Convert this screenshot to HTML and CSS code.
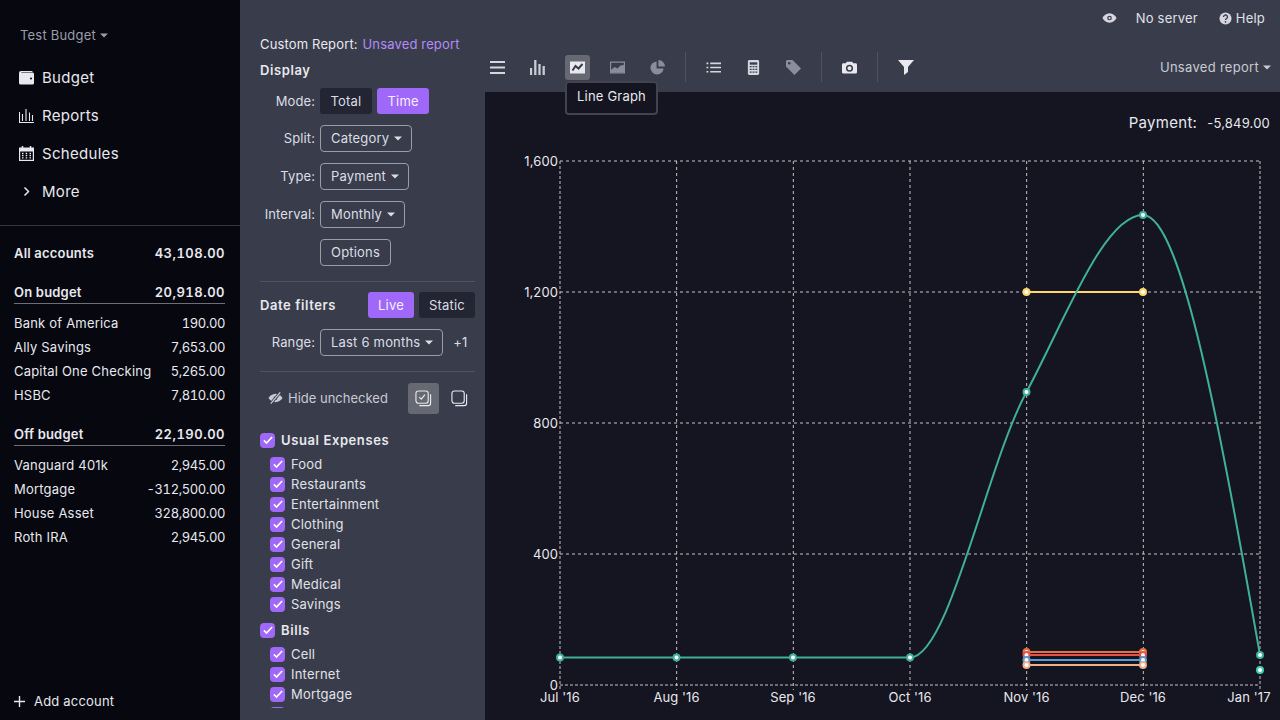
FILE: index.html
```html
<!DOCTYPE html>
<html lang="en">
<head>
    <meta charset="UTF-8">
    <title>Custom Report</title>
    <link rel="stylesheet" href="styles.css">
</head>
<body>
    <svg class="defs" width="0" height="0">
        <symbol id="check" viewBox="0 0 16 16">
            <path d="M2.500 8.500l3.500 3.500 7.500-8" fill="none" stroke="#fff" stroke-width="2.200"/>
        </symbol>
        <symbol id="caret" viewBox="0 0 8 5">
            <path d="M0 .5h8L4 4.500z" fill="currentColor"/>
        </symbol>
    </svg>

    <!-- Sidebar -->
    <div class="sidebar">
        <div class="budget-name">Test Budget <svg class="caret"><use href="#caret"/></svg></div>
        <div class="nav">
            <div class="nav-item">
                <svg viewBox="0 0 15 15"><path d="M2 1h10.500a1.500 1.500 0 0 1 1.300 1H2.300v.6H13.500A1.500 1.500 0 0 1 15 4v9a1.500 1.500 0 0 1-1.500 1.500H1.500A1.500 1.500 0 0 1 0 13V3a2 2 0 0 1 2-2z" fill="#e8e8ee"/><circle cx="12" cy="8.500" r="1" fill="#06070f"/></svg>
                Budget
            </div>
            <div class="nav-item">
                <svg viewBox="0 0 15 15"><path d="M.5 4v10.500H15M3.500 13V6M7 13V1M10.500 13V4.500M13.500 13V7" fill="none" stroke="#e8e8ee" stroke-width="1.100"/></svg>
                Reports
            </div>
            <div class="nav-item">
                <svg viewBox="0 0 15 15"><path d="M0 1.500h15V15H0z" fill="#e8e8ee"/><path d="M3.500 0v3M11.500 0v3" stroke="#e8e8ee" stroke-width="1.500"/><path d="M1.200 5.500h12.600v8.300H1.200z" fill="#06070f"/><path d="M3 7.500h1.500M6.700 7.500h1.500M10.500 7.500H12M3 9.700h1.500M6.700 9.700h1.500M10.500 9.700H12M3 11.900h1.500M6.700 11.900h1.500M10.500 11.900H12" stroke="#e8e8ee" stroke-width="1.300"/></svg>
                Schedules
            </div>
            <div class="nav-item">
                <svg viewBox="0 0 15 15"><path d="M5.500 3.500L9.500 7.500 5.500 11.500" fill="none" stroke="#e8e8ee" stroke-width="1.500"/></svg>
                More
            </div>
        </div>
        <div class="accounts">
            <div class="account-row total"><span>All accounts</span><span class="amount">43,108.00</span></div>
            <div class="account-row heading"><span>On budget</span><span class="amount">20,918.00</span></div>
            <div class="account-row"><span>Bank of America</span><span class="amount">190.00</span></div>
            <div class="account-row"><span>Ally Savings</span><span class="amount">7,653.00</span></div>
            <div class="account-row"><span>Capital One Checking</span><span class="amount">5,265.00</span></div>
            <div class="account-row"><span>HSBC</span><span class="amount">7,810.00</span></div>
            <div class="account-row heading"><span>Off budget</span><span class="amount">22,190.00</span></div>
            <div class="account-row"><span>Vanguard 401k</span><span class="amount">2,945.00</span></div>
            <div class="account-row"><span>Mortgage</span><span class="amount">-312,500.00</span></div>
            <div class="account-row"><span>House Asset</span><span class="amount">328,800.00</span></div>
            <div class="account-row"><span>Roth IRA</span><span class="amount">2,945.00</span></div>
        </div>
        <div class="add-account">
            <svg viewBox="0 0 12 12"><path d="M6 0v12M0 6h12" stroke="#e8e8ee" stroke-width="1.500"/></svg>
            Add account
        </div>
    </div>

    <div class="main">
        <!-- Top bar -->
        <div class="topbar">
            <svg class="top-eye" viewBox="0 0 16 12"><path d="M8 1C4.500 1 1.800 3.500.5 6c1.300 2.500 4 5 7.500 5s6.200-2.500 7.500-5C14.200 3.500 11.500 1 8 1z" fill="#d5d6de"/><circle cx="8" cy="6" r="2.500" fill="#393d4b"/><circle cx="8" cy="6" r="1.200" fill="#d5d6de"/></svg>
            <span class="top-server">No server</span>
            <svg class="top-help" viewBox="0 0 14 14"><circle cx="7" cy="7" r="6.500" fill="#d5d6de"/><path d="M4.900 5.300a2.100 2.100 0 1 1 3.300 1.700c-.8.500-1.200.9-1.200 1.600" fill="none" stroke="#393d4b" stroke-width="1.500"/><circle cx="7" cy="10.600" r=".9" fill="#393d4b"/></svg>
            <span>Help</span>
        </div>

        <div class="report">
            <!-- Left panel -->
            <div class="panel">
                <div class="report-title">Custom Report: <span class="report-name">Unsaved report</span></div>
                <div class="section-title">Display</div>
                <div class="field mode"><label>Mode:</label><button class="toggle">Total</button><button class="toggle active">Time</button></div>
                <div class="field"><label>Split:</label><button class="select">Category <svg class="caret"><use href="#caret"/></svg></button></div>
                <div class="field"><label>Type:</label><button class="select">Payment <svg class="caret"><use href="#caret"/></svg></button></div>
                <div class="field"><label>Interval:</label><button class="select">Monthly <svg class="caret"><use href="#caret"/></svg></button></div>
                <div class="field"><label></label><button class="select">Options</button></div>
                <hr class="divider first">
                <div class="date-head">
                    <div class="section-title">Date filters</div>
                    <button class="toggle active">Live</button><button class="toggle">Static</button>
                </div>
                <div class="field range"><label>Range:</label><button class="select">Last 6 months <svg class="caret"><use href="#caret"/></svg></button><span class="offset">+1</span></div>
                <hr class="divider">
                <div class="hide-row">
                    <svg class="hide-icon" viewBox="0 0 16 14"><path d="M8 2.500C4.500 2.500 1.800 5 .5 7c1.300 2 4 4.500 7.500 4.500S14.200 9 15.500 7C14.200 5 11.500 2.500 8 2.500z" fill="#c9cad3"/><circle cx="8" cy="7" r="2" fill="#393d4b"/><path d="M3 13L13 1" stroke="#393d4b" stroke-width="3.200"/><path d="M3 13L13 1" stroke="#c9cad3" stroke-width="1.400"/></svg>
                    <span class="hide-label">Hide unchecked</span>
                    <span class="square-btn on">
                        <svg viewBox="0 0 18 18"><rect x="1" y="1" width="13" height="13" rx="2.500" fill="none" stroke="#e8e8ee" stroke-width="1.200"/><path d="M16.500 4.500v9.500a2.500 2.500 0 0 1-2.500 2.500H4.500" fill="none" stroke="#e8e8ee" stroke-width="1.200"/><path d="M4.500 7.500l2.200 2.200 3.800-4.700" fill="none" stroke="#e8e8ee" stroke-width="1.300"/></svg>
                    </span>
                    <span class="square-btn">
                        <svg viewBox="0 0 18 18"><rect x="1" y="1" width="13" height="13" rx="2.500" fill="none" stroke="#e8e8ee" stroke-width="1.200"/><path d="M16.500 4.500v9.500a2.500 2.500 0 0 1-2.500 2.500H4.500" fill="none" stroke="#e8e8ee" stroke-width="1.200"/></svg>
                    </span>
                </div>
                <div class="categories">
                    <div class="group"><span class="box"><svg><use href="#check"/></svg></span>Usual Expenses</div>
                    <div class="cat"><span class="box"><svg><use href="#check"/></svg></span>Food</div>
                    <div class="cat"><span class="box"><svg><use href="#check"/></svg></span>Restaurants</div>
                    <div class="cat"><span class="box"><svg><use href="#check"/></svg></span>Entertainment</div>
                    <div class="cat"><span class="box"><svg><use href="#check"/></svg></span>Clothing</div>
                    <div class="cat"><span class="box"><svg><use href="#check"/></svg></span>General</div>
                    <div class="cat"><span class="box"><svg><use href="#check"/></svg></span>Gift</div>
                    <div class="cat"><span class="box"><svg><use href="#check"/></svg></span>Medical</div>
                    <div class="cat"><span class="box"><svg><use href="#check"/></svg></span>Savings</div>
                    <div class="group"><span class="box"><svg><use href="#check"/></svg></span>Bills</div>
                    <div class="cat"><span class="box"><svg><use href="#check"/></svg></span>Cell</div>
                    <div class="cat"><span class="box"><svg><use href="#check"/></svg></span>Internet</div>
                    <div class="cat"><span class="box"><svg><use href="#check"/></svg></span>Mortgage</div>
                    <div class="cat"><span class="box"><svg><use href="#check"/></svg></span></div>
                </div>
            </div>

            <div class="report-area">
                <!-- Toolbar -->
                <div class="toolbar">
                    <span class="tool">
                        <svg viewBox="0 0 15 15"><path d="M0 2h15M0 7.500h15M0 13h15" stroke="#d5d6de" stroke-width="2"/></svg>
                    </span>
                    <span class="tool">
                        <svg viewBox="0 0 15 15"><path d="M1 15V8M5.300 15V0M9.500 15V4M13.700 15V6" stroke="#c9cad3" stroke-width="2.300"/></svg>
                    </span>
                    <span class="tool on">
                        <svg viewBox="0 0 15 12"><path d="M0 0h15v12H0z" fill="#e8e8ee"/><path d="M2.500 9l3-4.500 3 2.500 4-4.500" fill="none" stroke="#393d4b" stroke-width="2"/></svg>
                        <span class="tooltip">Line Graph</span>
                    </span>
                    <span class="tool dim">
                        <svg viewBox="0 0 15 12"><path d="M.6.600h13.800v10.800H.6z" fill="none" stroke="#8a8d9b" stroke-width="1.200"/><path d="M1 11V8.500l3.500-3 3 1.500 3-3 3.500-.5V11z" fill="#8a8d9b"/></svg>
                    </span>
                    <span class="tool dim">
                        <svg viewBox="0 0 16 16"><path d="M7 1.500A7 7 0 1 0 14.500 9H7z" fill="#8a8d9b"/><path d="M9 0a7 7 0 0 1 7 7H9z" fill="#8a8d9b"/></svg>
                    </span>
                    <span class="tool-sep"></span>
                    <span class="tool">
                        <svg viewBox="0 0 16 12"><path d="M4.500 1.500H16M4.500 6H16M4.500 10.500H16" stroke="#d5d6de" stroke-width="1.800"/><path d="M.5 1.500h2M.5 6h2M.5 10.500h2" stroke="#d5d6de" stroke-width="1.800"/></svg>
                    </span>
                    <span class="tool">
                        <svg viewBox="0 0 14 16"><rect x="1" y="0" width="12" height="16" rx="1.500" fill="#d5d6de"/><path d="M3 2.500h8v2.500H3z" fill="#393d4b"/><path d="M3 7h2M6 7h2M9 7h2M3 10h2M6 10h2M9 10h2M3 13h2M6 13h2M9 13h2" stroke="#393d4b" stroke-width="1.300"/></svg>
                    </span>
                    <span class="tool dim">
                        <svg viewBox="0 0 16 16"><path d="M0 1.500A1.500 1.500 0 0 1 1.500 0H7l9 9-7 7-9-9z" fill="#8a8d9b"/><circle cx="3.500" cy="3.500" r="1.300" fill="#393d4b"/></svg>
                    </span>
                    <span class="tool-sep"></span>
                    <span class="tool">
                        <svg viewBox="0 0 16 13"><path d="M0 3.500A1.500 1.500 0 0 1 1.500 2H4L5.200.3h5.600L12 2h2.500A1.500 1.500 0 0 1 16 3.500V11.500A1.500 1.500 0 0 1 14.500 13h-13A1.500 1.500 0 0 1 0 11.500z" fill="#e8e8ee"/><circle cx="8" cy="7.300" r="3" fill="none" stroke="#393d4b" stroke-width="1.600"/></svg>
                    </span>
                    <span class="tool-sep"></span>
                    <span class="tool filter">
                        <svg viewBox="0 0 16 15"><path d="M0 0h16L10 7v5l-4 3V7z" fill="#e8e8ee"/></svg>
                    </span>
                    <span class="saved">Unsaved report <svg class="caret"><use href="#caret"/></svg></span>
                </div>

                <!-- Chart -->
                <div class="chart">
                    <div class="chart-total"><span class="chart-label">Payment:</span><span>-5,849.00</span></div>
                    <svg class="chart-svg" width="795" height="628" viewBox="485 92 795 628">
                        <g class="grid">
                            <path d="M560 161H1260M560 292H1260M560 423H1260M560 554H1260"/>
                            <path d="M676.670 161V690M793.330 161V690M910 161V690M1026.670 161V690M1143.330 161V690"/>
                        </g>
                        <g class="axis">
                            <path d="M560 161V690M1260 161V690M560 685H1260"/>
                        </g>
                        <g class="ticks">
                            <text x="558" y="166" text-anchor="end">1,600</text>
                            <text x="558" y="297" text-anchor="end">1,200</text>
                            <text x="558" y="428" text-anchor="end">800</text>
                            <text x="558" y="559" text-anchor="end">400</text>
                            <text x="558" y="690" text-anchor="end">0</text>
                            <text x="560" y="702" text-anchor="middle">Jul '16</text>
                            <text x="676.500" y="702" text-anchor="middle">Aug '16</text>
                            <text x="793" y="702" text-anchor="middle">Sep '16</text>
                            <text x="910" y="702" text-anchor="middle">Oct '16</text>
                            <text x="1026.500" y="702" text-anchor="middle">Nov '16</text>
                            <text x="1143" y="702" text-anchor="middle">Dec '16</text>
                            <text x="1249" y="702" text-anchor="middle">Jan '17</text>
                        </g>
                        <path class="line" stroke="#ffd76a" d="M1026.500 292H1143"/>
                        <path class="line" stroke="#e8713c" d="M1026.500 652H1143"/>
                        <path class="line" stroke="#e0524a" d="M1026.500 655H1143"/>
                        <path class="line" stroke="#5b9bd0" d="M1026.500 660H1143"/>
                        <path class="line" stroke="#f0b088" d="M1026.500 665H1143"/>
                        <path class="line" stroke="#3fb09a" d="M560 657.500H910C949 657.500 987 464 1026.500 392C1065 320 1104 215 1143 215C1182 215 1221 435 1260 655"/>
                        <g class="dots" stroke="#ffd76a"><circle cx="1026.500" cy="292" r="3"/><circle cx="1143" cy="292" r="3"/></g>
                        <g class="dots" stroke="#e8713c"><circle cx="1026.500" cy="652" r="3"/><circle cx="1143" cy="652" r="3"/></g>
                        <g class="dots" stroke="#e0524a"><circle cx="1026.500" cy="655" r="3"/><circle cx="1143" cy="655" r="3"/></g>
                        <g class="dots" stroke="#5b9bd0"><circle cx="1026.500" cy="660" r="3"/><circle cx="1143" cy="660" r="3"/></g>
                        <g class="dots" stroke="#f0b088"><circle cx="1026.500" cy="665" r="3"/><circle cx="1143" cy="665" r="3"/></g>
                        <g class="dots" stroke="#3fb09a">
                            <circle cx="560" cy="657.500" r="3"/><circle cx="676.500" cy="657.500" r="3"/><circle cx="793" cy="657.500" r="3"/><circle cx="910" cy="657.500" r="3"/>
                            <circle cx="1026.500" cy="392" r="3"/><circle cx="1143" cy="215" r="3"/><circle cx="1260" cy="655" r="3"/>
                        </g>
                        <circle class="dots" stroke="#40d0b0" cx="1260" cy="670" r="3"/>
                    </svg>
                </div>
            </div>
        </div>
    </div>
</body>
</html>
```

FILE: styles.css
```css
* {
    box-sizing: border-box;
}

body {
    font-family: 'Inter', sans-serif;
    font-size: 13px;
    letter-spacing: 0.2px;
    margin: 0;
    height: 720px;
    overflow: hidden;
    display: flex;
    background-color: #393d4b;
    color: #e8e8ee;
}

.defs {
    position: absolute;
}

.caret {
    width: 8px;
    height: 5px;
    vertical-align: 2px;
}

/* Sidebar */
.sidebar {
    width: 240px;
    height: 720px;
    flex-shrink: 0;
    display: flex;
    flex-direction: column;
    background-color: #06070f;
}

.budget-name {
    color: #9a9da9;
    padding: 27px 20px 0;
    height: 58px;
    line-height: 16px;
}

.nav-item {
    display: flex;
    align-items: center;
    gap: 8px;
    height: 38px;
    padding-left: 19px;
    font-size: 15px;
    letter-spacing: 0.3px;
}

.nav-item svg {
    width: 15px;
    height: 15px;
}

.accounts {
    margin-top: 15px;
    padding: 15px 15px 0 14px;
    border-top: 1px solid #33353f;
}

.account-row {
    display: flex;
    justify-content: space-between;
    height: 24px;
    line-height: 24px;
}

.amount {
    font-variant-numeric: tabular-nums;
    letter-spacing: -0.4px;
}

.account-row.total {
    font-weight: 600;
    height: 26px;
    margin-bottom: 14px;
}

.account-row.heading {
    font-weight: 600;
    height: 23px;
    line-height: 22px;
    margin-bottom: 7px;
    border-bottom: 1px solid #6c6e78;
}

.total .amount,
.heading .amount {
    letter-spacing: 0.5px;
}

.account-row:not(.heading):not(.total) + .account-row.heading {
    margin-top: 16px;
}

.add-account {
    display: flex;
    align-items: center;
    gap: 9px;
    margin-top: auto;
    height: 38px;
    padding-left: 14px;
}

.add-account svg {
    width: 11px;
    height: 11px;
}

/* Main */
.main {
    flex: 1;
    min-width: 0;
    display: flex;
    flex-direction: column;
    height: 720px;
}

.topbar {
    height: 34px;
    flex-shrink: 0;
    display: flex;
    align-items: center;
    justify-content: flex-end;
    padding: 2px 15px 0 0;
    color: #e0e1e8;
}

.top-eye {
    width: 15px;
    height: 12px;
}

.top-server {
    margin: 0 21px 0 19px;
}

.top-help {
    width: 13px;
    height: 13px;
    margin-right: 4px;
}

.report {
    flex: 1;
    min-height: 0;
    display: flex;
}

/* Left panel */
.panel {
    width: 245px;
    flex-shrink: 0;
    height: 674px;
    overflow: hidden;
    padding: 0 10px 0 20px;
}

.report-title {
    height: 20px;
    line-height: 20px;
    letter-spacing: 0.15px;
    color: #e8e8ee;
}

.report-name {
    color: #b48bf8;
    margin-left: 1px;
}

.section-title {
    font-weight: 600;
    letter-spacing: 0.6px;
    height: 20px;
    line-height: 20px;
    margin: 6px 0 8px;
}

.field {
    display: flex;
    align-items: center;
    height: 38px;
}

.field.mode {
    height: 26px;
    margin-bottom: 5px;
}

.field.range {
    height: 28px;
    margin-bottom: 15px;
}

.field label {
    width: 55px;
    margin-right: 5px;
    text-align: right;
    letter-spacing: 0.1px;
    color: #dcdde4;
}

button {
    font: inherit;
    letter-spacing: inherit;
    color: #dcdde4;
    cursor: pointer;
}

.toggle {
    height: 26px;
    padding: 0 10px;
    margin-right: 5px;
    border: none;
    border-radius: 3px;
    background-color: #232533;
}

.mode .toggle {
    padding: 0 10.5px;
}

.toggle.active {
    background-color: #9f68f8;
    color: #f4effe;
}

.select {
    height: 27px;
    padding: 0 10px;
    border: 1px solid #9a9da9;
    border-radius: 4px;
    background: none;
}

.select .caret {
    margin: 0 -1px 0 1px;
}

.offset {
    margin-left: 10px;
    color: #dcdde4;
}

.divider {
    border: none;
    border-top: 1px solid #51545f;
    margin: 0;
}

.divider.first {
    margin-top: 10px;
}

.date-head {
    display: flex;
    align-items: center;
    height: 46px;
}

.date-head .section-title {
    margin: 0 auto 0 0;
}

.date-head .toggle:last-child {
    margin-right: 0;
}

.hide-row {
    display: flex;
    align-items: center;
    height: 52px;
    padding-left: 8px;
    color: #c9cad3;
}

.hide-icon {
    width: 15px;
    height: 14px;
    margin-right: 5px;
}

.hide-label {
    letter-spacing: 0;
    white-space: nowrap;
    margin-right: 20px;
}

.square-btn {
    width: 31px;
    height: 31px;
    margin-right: 5px;
    border-radius: 3px;
    display: flex;
    align-items: center;
    justify-content: center;
}

.square-btn:last-child {
    margin-right: 0;
}

.square-btn.on {
    background-color: #676972;
}

.square-btn svg {
    width: 17px;
    height: 17px;
}

.categories {
    padding-top: 6px;
}

.box {
    width: 15px;
    height: 15px;
    border-radius: 4px;
    background-color: #9f68f8;
    display: inline-flex;
    align-items: center;
    justify-content: center;
    margin-right: 6px;
}

.box svg {
    width: 12px;
    height: 12px;
}

.group {
    display: flex;
    align-items: center;
    height: 20px;
    font-weight: 600;
    letter-spacing: 0.6px;
}

.cat {
    display: flex;
    align-items: center;
    height: 20px;
    padding-left: 10px;
    color: #e0e1e8;
}

.group + .cat {
    margin-top: 4px;
}

.cat + .group {
    margin-top: 6px;
}

/* Toolbar and chart */
.report-area {
    flex: 1;
    min-width: 0;
    display: flex;
    flex-direction: column;
}

.toolbar {
    height: 58px;
    flex-shrink: 0;
    display: flex;
    align-items: center;
    padding: 8px 9px 0 0;
}

.tool {
    position: relative;
    width: 25px;
    height: 25px;
    margin-right: 15px;
    border-radius: 3px;
    display: flex;
    align-items: center;
    justify-content: center;
}

.tool svg {
    width: 15px;
    height: 15px;
}

.tool.filter svg {
    width: 16px;
}

.tool.on {
    background-color: #676972;
}

.tool-sep {
    width: 1px;
    height: 30px;
    margin: 0 15px 0 0;
    background-color: #51545f;
}

.tooltip {
    position: absolute;
    top: 26px;
    left: 0;
    white-space: nowrap;
    padding: 0 10px;
    height: 34px;
    line-height: 26px;
    background-color: #141520;
    border: 2px solid #41444f;
    border-radius: 4px;
    color: #e8e8ee;
    z-index: 2;
}

.saved {
    margin-left: auto;
    letter-spacing: 0.3px;
    color: #c9cad3;
}

.chart {
    flex: 1;
    min-height: 0;
    position: relative;
    background-color: #141520;
}

.chart-svg {
    display: block;
}

.chart-total {
    position: absolute;
    top: 21px;
    right: 10px;
    display: flex;
    align-items: baseline;
    gap: 10px;
}

.chart-label {
    font-size: 15px;
    letter-spacing: 0.3px;
    color: #e8e8ee;
}

.grid path {
    fill: none;
    stroke: #c4c4c4;
    stroke-dasharray: 3 3;
}

.axis path {
    fill: none;
    stroke: #c4c4c4;
    stroke-dasharray: 3 2;
}

.ticks text {
    font-family: 'Inter', sans-serif;
    font-size: 13px;
    letter-spacing: 0.1px;
    fill: #e8e8ee;
}

.line {
    fill: none;
    stroke-width: 2;
}

.dots {
    fill: #fff;
    stroke-width: 2;
}
```
